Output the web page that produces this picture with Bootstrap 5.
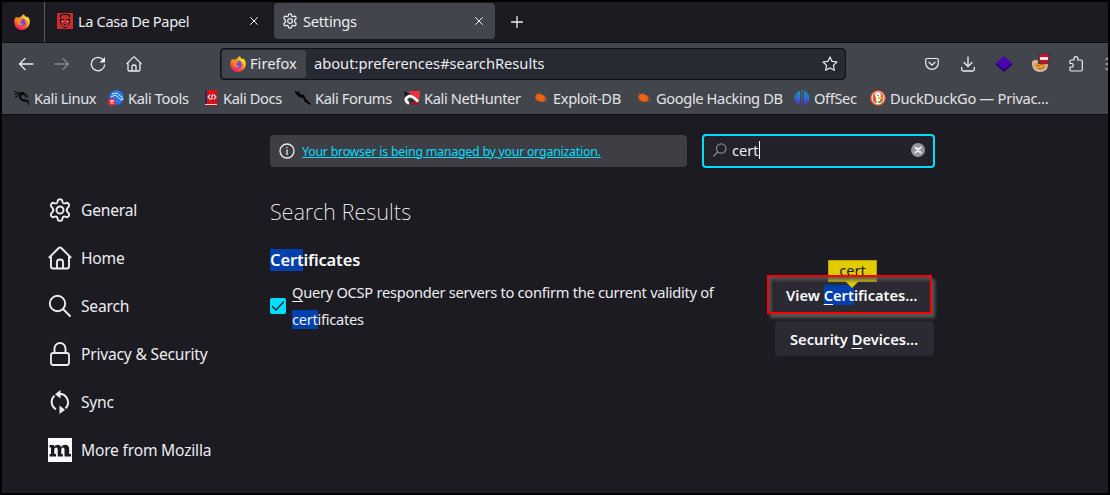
<!DOCTYPE html>
<html lang="en" data-bs-theme="dark">
<head>
<meta charset="utf-8">
<meta name="viewport" content="width=device-width, initial-scale=1">
<title>Settings</title>
<link rel="stylesheet" href="https://cdn.jsdelivr.net/npm/bootstrap@5.3.0/dist/css/bootstrap.min.css">
<style>
html,body{height:100%}
body{font-family:"Noto Sans",sans-serif;font-size:14.67px;line-height:20px;color:#ededf1;background:#1c1b22;overflow:hidden}
svg{display:block;flex:none}
.window{height:495px;border:2px solid #000;overflow:hidden}
.line{fill:none;stroke:currentColor;stroke-linecap:round;stroke-linejoin:round}
.tabs{height:40px;background:#1c1b22}
.pinned{width:43px;border-right:1px solid #5b5d65;padding-left:12px}
.tab-item{width:229px;padding:0 16px 2px 12px;letter-spacing:-.38px}
.tab-item span{margin-left:5px}
.tab-on{width:221px;height:36px;margin-top:1px;background:#42454c;border-radius:4px;padding:0 12px 0 8px;letter-spacing:-.25px}
.tab-on span{margin-left:5px}
.new-tab{margin-left:16px}
.toolbar-box{height:73px;background:#42454c;border-top:1px solid #101116;border-bottom:1px solid #0c0c12}
.navrow{height:41px;padding-left:16px}
.urlbar{width:626px;height:32px;background:#272933;border:1px solid #0e1017;border-radius:4px;padding:0 7px 0 1px;margin-left:78px;flex:none}
.urlbar>span,.identity span{position:relative;top:-1px}
.identity{width:84px;height:28px;background:#42454c;border-radius:3px;padding-left:8px}
.gap-nav{margin-left:20px}
.marks{height:28px;padding:0 0 0 12px;color:#e3e3e7;white-space:nowrap;letter-spacing:-.38px}
.marks>div{display:flex;align-items:center;gap:4px;flex:none}
.page-body{height:377px}
.sidebar{width:268px;padding:71px 0 0 46px}
.side-link{height:48px;gap:9px;font-size:15.6px;letter-spacing:-.2px}
.content-col{width:665px;padding-top:19px}
.notice{width:417px;height:32px;background:#3f3e44;border-radius:4px;padding-left:9px;margin-top:1px;font-size:12.4px;letter-spacing:-.25px}
.notice a{color:#00ddff;margin-left:7px;padding-top:1px}
.searchbox{width:233px;height:34px;border:2px solid #00ddff;border-radius:4px;background:#23222b;padding:0 8px 2px 9px}
.caret{width:1px;height:18px;background:#fff}
.results{font-size:21.4px;font-weight:200;line-height:28px;margin:30px 0 0;letter-spacing:.2px}
.group-title{font-size:16.5px;font-weight:600;line-height:22px;margin:23px 0 0;letter-spacing:-.15px;color:#fbfbfe}
.hit{background:#0040ad;display:inline-block}
.query .hit{line-height:19px}
.key{text-decoration:underline;text-underline-offset:3px;text-decoration-thickness:1px}
.check{width:16px;height:16px;background:#00ddff;border-radius:2px;margin-top:27px;color:#23222b}
.query{width:440px;line-height:27px;margin:8px 0 0 6px;font-size:14.67px;letter-spacing:-.28px}
.actions{gap:8px;padding-top:52px;margin-right:1px}
.action{width:159px;height:35px;border-radius:4px;background:#2b2a33;font-weight:600;font-size:14.67px;padding:0 0 2px 11px;color:#fbfbfe}
.action.lower{padding-left:15px;padding-bottom:0}
.tip{position:absolute;left:53px;top:-18px;width:49px;height:22px;background:#e0ca00;border:1px solid #b8a600;color:#1c1b22;line-height:19px;text-align:center}
.tip:after{content:"";position:absolute;left:16px;top:20px;border:7px solid transparent;border-top-color:#e0ca00;border-bottom:0}
.frame-red{position:absolute;left:-8px;top:-3px;width:165px;height:39px;border:2px solid #fb0000;box-shadow:3px 4px 3px #555,inset 3px 3px 4px #555}
</style>
</head>
<body>
<svg width="0" height="0" class="position-absolute" aria-hidden="true">
<defs>
<linearGradient id="fire" x1=".8" y1="0" x2=".3" y2="1"><stop stop-color="#ffe226"/><stop offset=".45" stop-color="#ff8a1c"/><stop offset="1" stop-color="#f5156c"/></linearGradient>
<linearGradient id="wave" gradientUnits="userSpaceOnUse" x1="0" y1="0" x2="0" y2="16"><stop stop-color="#129bb5"/><stop offset=".5" stop-color="#2f6fdc"/><stop offset="1" stop-color="#5a22c8"/></linearGradient>
<symbol id="fox" viewBox="0 0 16 16"><path d="M8 1.400 10 0c.2 1.700 1.400 2.300 2.500 3.200l.9-.6C15.300 4.300 16 6.400 15.800 8.600 15.400 13 12 16 8 16S.3 12.800.2 8.300C.1 6.200 1 4.200 2.200 2.500l.7 1.400C3.800 3.100 5 3.100 6 3.400z" fill="url(#fire)"/><circle cx="8" cy="8.400" r="3.600" fill="#7542e5"/><path d="M2.400 4.600c1.500-.6 3.200-.3 4 .7 1 .3 2 .2 2.300.7-.2 1.100-1.700 1.300-2.500 1.800.2 1.900 1.800 2.400 3.600 1.700-1 2.500-5.800 2.500-6.800-1.200z" fill="#ff8b20"/><path d="M9.500 2.500c1 2 3 3 3 6 1-1.200.8-2.500.4-3.500 2 2.800 1.500 6.200-.5 8.200 3.200-1.400 4-6.500 1.500-9.500l-1-.7z" fill="#ffd62a"/></symbol>
<symbol id="gear" viewBox="0 0 24 24"><path class="line" stroke-width="1.900" d="M9.900 2.200c.5-1.300 3.700-1.300 4.200 0l.5 2.100c.3.900 1.200 1.300 2.100 1.100l2.100-.6c1.500-.2 3 2.400 2.100 3.600l-1.500 1.700c-.7.900-.7 2.900 0 3.800l1.500 1.700c.9 1.200-.6 3.800-2.100 3.600l-2.100-.6c-.9-.2-1.800.2-2.100 1.100l-.5 2.100c-.5 1.300-3.700 1.300-4.200 0l-.5-2.100c-.3-.9-1.200-1.300-2.100-1.100l-2.100.6c-1.500.2-3-2.400-2.100-3.600l1.500-1.700c.7-.9.700-2.900 0-3.800L3.100 8.400c-.9-1.200.6-3.800 2.100-3.600l2.100.6c.9.200 1.800-.2 2.100-1.100z"/><circle class="line" stroke-width="1.900" cx="12" cy="12" r="3.500"/></symbol>
<symbol id="house" viewBox="0 0 24 24"><path class="line" stroke-width="1.900" d="M1.300 11.400 10.700 2q1.300-1.200 2.600 0l9.400 9.400M3 10v10.500q0 2 2 2h14q2 0 2-2V10M9 22v-6q0-2.500 3-2.500t3 2.500v6"/></symbol>
<symbol id="dragon" viewBox="0 0 16 16"><path fill="none" stroke="#050506" d="M0 1.200 5 3l3 .3 2-1M.5 4.500 5 4l5 1 3 3.500M1 7.500 6 5C5 8 6 10 9 10c3.500 0 5.500 1.500 6 5M9 3l4 2 .5 2M10 10l5 1"/><path fill="#050506" d="m6 2.500 3-.5 3 3-3-.5-2 .5c0 4 2 4.500 4 5s2 1 4 3c-3-2-8-.5-9-4.500L6 5z"/></symbol>
<symbol id="bug" viewBox="0 0 16 16"><ellipse cx="7.500" cy="8" rx="5.300" ry="3.700" transform="rotate(24 8 8)" fill="#ed6310"/><path d="m3 3 3 2M1 6l3 1M2 11l3-1M7 2l1 3M8 12l1-2M12 5l0 3M11 9l4 0M11 10l4 3" stroke="#b7592f" stroke-width=".6"/></symbol>
</defs></svg>

<div class="window">
  <div class="tabs d-flex">
    <div class="pinned d-flex align-items-center"><svg width="16" height="16"><use href="#fox"/></svg></div>
    <div class="tab-item d-flex align-items-center">
      <svg width="16" height="16" viewBox="0 0 16 16"><path fill="#c92a2b" d="M0 0h16v16H0z"/><path d="M4 1h8v1h1v3h-1V3h-1V2H5v1H4v2H3V2h1zM3 6h1v4h1v2h1v1H5v-1H4v-2H3zM12 6h1v4h-1v2h-1v1h-1v-1h1v-2h1zM4 6h3v1H4zM9 6h3v1H9zM7 11h2v1H7zM6 14h4v1H6z" fill="#111"/><path d="M5 8h1v1H5zM10 8h1v1h-1z" fill="#f5dddd"/></svg>
      <span>La Casa De Papel</span>
      <svg class="ms-auto" width="8" height="8" viewBox="0 0 8 8"><path class="line" d="m.5.500 7 7m0-7-7 7"/></svg>
    </div>
    <div class="tab-on d-flex align-items-center">
      <svg width="16" height="16"><use href="#gear"/></svg><span>Settings</span>
      <svg class="ms-auto" width="8" height="8" viewBox="0 0 8 8"><path class="line" d="m.5.500 7 7m0-7-7 7"/></svg>
    </div>
    <svg class="new-tab align-self-center" width="12" height="12" viewBox="0 0 12 12"><path class="line" stroke-width="1.300" d="M6 .5v11M.5 6h11"/></svg>
  </div>

  <div class="toolbar-box">
    <div class="navrow d-flex align-items-center">
      <svg width="16" height="16" viewBox="0 0 16 16"><path class="line" stroke-width="1.300" d="M15 8H1.500M7 2.500 1.500 8 7 13.500"/></svg>
      <svg class="gap-nav" style="color:#85878c" width="16" height="16" viewBox="0 0 16 16"><path class="line" stroke-width="1.300" d="M1 8h13.500M9 2.500 14.500 8 9 13.500"/></svg>
      <svg class="gap-nav" width="16" height="16" viewBox="0 0 16 16"><path class="line" stroke-width="1.300" d="M13.600 4.300A6.700 6.700 0 1 0 14.700 9"/><path d="M15 1v5.500H9.500z" fill="currentColor"/></svg>
      <svg class="gap-nav" width="16" height="16"><use href="#house"/></svg>
      <div class="urlbar d-flex align-items-center">
        <div class="identity d-flex align-items-center"><svg width="16" height="16"><use href="#fox"/></svg><span class="ms-1">Firefox</span></div>
        <span class="ms-2">about:preferences#searchResults</span>
        <svg class="ms-auto" width="16" height="16" viewBox="0 0 16 16"><path class="line" stroke-width="1.200" d="m8 .9 2.100 4.500 4.900.6-3.600 3.400.9 4.900L8 11.900l-4.300 2.400.9-4.900L1 6l4.900-.6z"/></svg>
      </div>
      <svg style="margin-left:79px" width="14" height="14" viewBox="0 0 14 14"><path class="line" stroke-width="1.200" d="M2 1.500h10q1.300 0 1.300 1.300V6a6.300 6.300 0 0 1-12.600 0V2.800q0-1.300 1.300-1.300zM4 5.200l3 2.900 3-2.900"/></svg>
      <svg style="margin-left:22px" width="14" height="16" viewBox="0 0 14 16"><path class="line" stroke-width="1.300" d="M7 1v9M3 6.500 7 10.500l4-4M.7 11.500v2q0 1.500 1.500 1.500h9.600q1.500 0 1.500-1.500v-2"/></svg>
      <svg style="margin-left:20px" width="18" height="16" viewBox="0 0 18 16"><path d="m1 9 8 7 8-7V7H1z" fill="#250078"/><path d="m9 0 8 7-8 6-8-6z" fill="#4a05b0"/></svg>
      <svg style="margin-left:18px" width="20" height="22" viewBox="0 0 20 22"><path d="M1 9 3 7l12 1 2 3q0 8-8 8-7 0-8-7z" fill="#cbbba5"/><path d="M3 11q3-3 6-1 4-3 7 0-1 7-7 7-5 0-6-6z" fill="#ee9a3c"/><path d="m5 12 3 1 2-2 3 1m-6 3 3 1 4-2" stroke="#a05b20" stroke-width=".8" fill="none"/><path d="M7 0h13v11H7z" fill="#3b3e43"/><circle cx="13" cy="5.500" r="5.200" fill="#c5122d"/><path d="M9 4.200h8v2.600H9z" fill="#fff"/></svg>
      <svg style="margin-left:18px" width="14" height="16" viewBox="0 0 14 16"><path class="line" stroke-width="1.200" d="M1 5.200q0-1.200 1.200-1.200H5V2.600a1.900 1.900 0 0 1 3.800 0V4h3.300q1.200 0 1.200 1.200v8.600q0 1.200-1.200 1.200H2.200Q1 15 1 13.800V11h1.600a1.700 1.700 0 0 0 0-3.500H1z"/></svg>
      <svg style="margin-left:22px" width="3" height="12" viewBox="0 0 3 12"><path class="line" d="M1 1h5M1 6h5M1 11h5"/></svg>
    </div>
    <div class="marks d-flex align-items-center">
      <div style="width:94px"><svg width="16" height="16"><use href="#dragon"/></svg>Kali Linux</div>
      <div style="width:95px"><svg width="16" height="16" viewBox="0 0 16 16"><circle cx="8.500" cy="7.500" r="7.300" fill="#2378ee"/><path d="M4 4q5-2 7 1 3 1 4 5M3 7q5-3 7 0t4 3" fill="none" stroke="#e7f3ff"/><circle cx="3.800" cy="12" r="3.800" fill="#e82432"/><path d="M2 10.500h4M3.200 11v3M5 11v3" stroke="#fff" stroke-width=".8"/></svg>Kali Tools</div>
      <div style="width:92px"><svg width="16" height="16" viewBox="0 0 16 16"><path fill="#d9121a" d="M3 0h11v14H3z"/><path fill="#292961" d="M2 0h2v14H2z"/><path fill="#ddd" d="M2 14h12v1H2z"/><path fill="#a90d16" d="M2 15h12v1H2z"/><path class="line" stroke-width="1.200" d="M7 5 5 7l2 2m4-4 2 2-2 2M9.500 4.500l-1 5"/></svg>Kali Docs</div>
      <div style="width:109px"><svg width="16" height="16" viewBox="0 0 16 16"><path d="m0 1 3 1 1-1 1 3 4 1 2 4 5 5-1 1-5-3-2-4-4-1-2-2-2-2z" fill="#070708"/></svg>Kali Forums</div>
      <div style="width:129px"><svg width="16" height="16" viewBox="0 0 16 16"><path d="M4 1h12l-1 12z" fill="#ef303c"/><path d="m0 1 5 3-4 3z" fill="#171719"/><path d="m6 14 6-5 3 6z" fill="#a0122b"/><path d="M5 13.500q-5-3-2-6 4-4 11 4" fill="none" stroke="#fff" stroke-width="2.800"/><path d="m5 12 4-2" stroke="#222" stroke-width="1.500"/></svg>Kali NetHunter</div>
      <div style="width:103px"><svg width="16" height="16"><use href="#bug"/></svg>Exploit-DB</div>
      <div style="width:158px"><svg width="16" height="16"><use href="#bug"/></svg>Google Hacking DB</div>
      <div style="width:76px"><svg width="16" height="16" viewBox="0 0 16 16"><path fill="url(#wave)" d="M6 1v13.500C3 14 .5 11.500.5 8S3 1.500 6 1zM10 1v13.500c3-.5 5.500-3 5.500-6.500S13 1.500 10 1zM7.500 0h1v16h-1z"/><path d="M3 2v12M13 2v12" stroke="#42454c" stroke-width=".4"/></svg>OffSec</div>
      <div><svg width="16" height="16" viewBox="0 0 16 16"><circle cx="8" cy="8" r="7.800" fill="#de5833"/><circle cx="8" cy="8" r="6" fill="none" stroke="#fff"/><path d="M5 4q4-3 6 1l-1 4 1 4-4 1z" fill="#fff"/><path d="M8 7h4v2H8z" fill="#ffbf21"/><path d="M8 11h3v2H8z" fill="#54b34a"/><circle cx="8" cy="5.500" r=".7" fill="#26496b"/></svg><span style="letter-spacing:-.27px">DuckDuckGo — Privac…</span></div>
    </div>
  </div>

  <div class="page-body d-flex">
    <nav class="sidebar flex-shrink-0">
      <div class="side-link d-flex align-items-center"><svg width="24" height="24"><use href="#gear"/></svg><span>General</span></div>
      <div class="side-link d-flex align-items-center"><svg width="24" height="24"><use href="#house"/></svg><span>Home</span></div>
      <div class="side-link d-flex align-items-center"><svg width="24" height="24" viewBox="0 0 24 24"><circle class="line" stroke-width="1.900" cx="9.500" cy="9.500" r="7.700"/><path class="line" stroke-width="1.900" d="m15 15 7 7"/></svg><span>Search</span></div>
      <div class="side-link d-flex align-items-center"><svg width="24" height="24" viewBox="0 0 24 24"><rect class="line" stroke-width="1.800" x="3" y="11" width="18" height="12" rx="2.200"/><path class="line" stroke-width="1.900" d="M6.500 11V6.500a5.500 5.500 0 0 1 11 0V11"/></svg><span>Privacy &amp; Security</span></div>
      <div class="side-link d-flex align-items-center"><svg width="24" height="24" viewBox="0 0 24 24"><path fill="none" stroke="currentColor" stroke-width="2" d="M8 19.300A8.300 8.300 0 0 1 6.500 5.800M11 4a8.300 8.300 0 0 1 6.500 14.200"/><path fill="currentColor" d="M12.500 0v8.500L7 4.200zM11.500 15.500V24l5.500-4.300z"/></svg><span>Sync</span></div>
      <div class="side-link d-flex align-items-center"><svg width="24" height="24" viewBox="0 0 24 24"><path fill="#fbfbfe" d="M0 0h24v24H0z"/><path fill="#1c1b22" d="M1.500 7H6v2q1.200-2.300 3.700-2.300 2.600 0 3.500 2.300 1.300-2.300 4-2.300 4 0 4 4.500V16H23v2.500h-6.500v-7q0-2-1.500-2-1.700 0-1.700 2.300V16h1.500v2.500H9.700v-7q0-2-1.500-2-1.900 0-1.900 2.300V16H8v2.500H1.500V16H3V9.500H1.500z"/></svg><span>More from Mozilla</span></div>
    </nav>
    <main class="content-col">
      <div class="d-flex justify-content-between">
        <div class="notice d-flex align-items-center"><svg width="16" height="16" viewBox="0 0 16 16"><circle class="line" stroke-width="1.300" cx="8" cy="8" r="7"/><path class="line" stroke-width="1.300" d="M8 7v4.500M8 4.500v.1"/></svg><a href="#">Your browser is being managed by your organization.</a></div>
        <div class="searchbox d-flex align-items-center"><svg style="color:#85848a" width="14" height="14" viewBox="0 0 14 14"><circle class="line" stroke-width="1.200" cx="8.200" cy="5.500" r="4.700"/><path class="line" stroke-width="1.300" d="M4.500 9 .8 13"/></svg><span style="margin-left:5px">cert</span><i class="caret"></i><svg class="ms-auto" width="14" height="14" viewBox="0 0 14 14"><circle cx="7" cy="7" r="7" fill="#95949a"/><path class="line" stroke-width="2" d="m4.500 4.500 5 5m0-5-5 5"/></svg></div>
      </div>
      <h1 class="results">Search Results</h1>
      <div class="d-flex justify-content-between">
        <section>
          <h2 class="group-title"><span class="hit">Cert</span>ificates</h2>
          <div class="d-flex"><div class="check"><svg width="16" height="16" viewBox="0 0 16 16"><path class="line" stroke-width="1.300" d="m2.500 8.500 3.500 3.500 7.500-8"/></svg></div>
          <div class="query"><span class="key">Q</span>uery OCSP responder servers to confirm the current validity of <span class="hit">cert</span>ificates</div></div>
        </section>
        <div class="actions d-flex flex-column">
          <div class="position-relative action d-flex align-items-center">
            <span>View <span class="hit"><span class="key">C</span>ert</span>ificates…</span>
            <div class="tip fw-normal">cert</div><div class="frame-red"></div>
          </div>
          <div class="action lower d-flex align-items-center"><span>Security <span class="key">D</span>evices…</span></div>
        </div>
      </div>
    </main>
  </div>
</div>
<script src="https://cdn.jsdelivr.net/npm/bootstrap@5.3.0/dist/js/bootstrap.bundle.min.js"></script>
</body>
</html>
